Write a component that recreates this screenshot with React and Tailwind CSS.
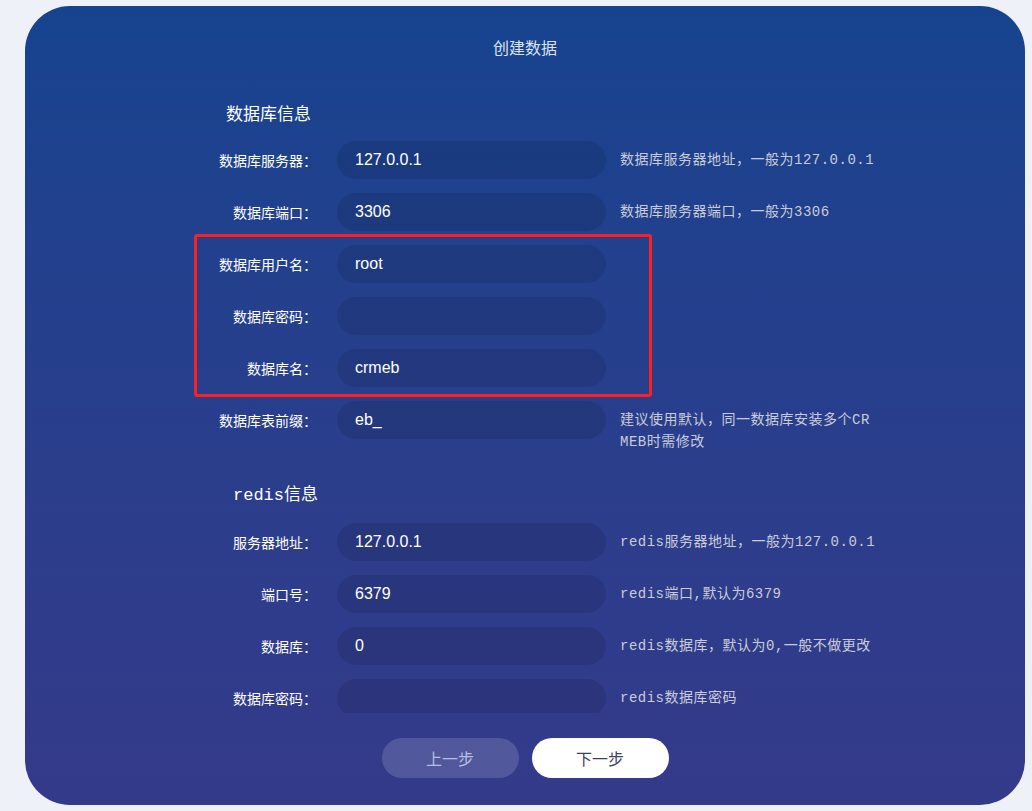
import React from 'react';

const cjk = "font-['Noto_Sans_CJK_SC',sans-serif]";
const mono = "font-['Liberation_Mono','Noto_Sans_CJK_SC',monospace]";

const dbFields = [
  { label: '数据库服务器：', value: '127.0.0.1', help: '数据库服务器地址，一般为127.0.0.1' },
  { label: '数据库端口：', value: '3306', help: '数据库服务器端口，一般为3306' },
  { label: '数据库用户名：', value: 'root' },
  { label: '数据库密码：', value: '' },
  { label: '数据库名：', value: 'crmeb' },
  { label: '数据库表前缀：', value: 'eb_', help: '建议使用默认，同一数据库安装多个CRMEB时需修改' },
];

const redisFields = [
  { label: '服务器地址：', value: '127.0.0.1', help: 'redis服务器地址，一般为127.0.0.1' },
  { label: '端口号：', value: '6379', help: 'redis端口,默认为6379' },
  { label: '数据库：', value: '0', help: 'redis数据库，默认为0,一般不做更改' },
  { label: '数据库密码：', value: '', help: 'redis数据库密码' },
];

function Row({ label, value, help }) {
  return (
    <div className="flex h-[38px] items-start">
      <div className={`${cjk} flex h-[38px] w-[127px] shrink-0 items-center justify-end text-[14px] text-white`}>
        {label}
      </div>
      <div className="ml-[20px] flex h-[38px] w-[269px] shrink-0 items-center rounded-full bg-black/10 pl-[18px] font-['Liberation_Sans',sans-serif] text-[16px] text-white">
        {value}
      </div>
      {help && (
        <div className={`${mono} ml-[14px] w-[257px] break-all pt-[8px] text-[14px] leading-[22px] tracking-[0.5px] text-[#c9ccd8]`}>
          {help}
        </div>
      )}
    </div>
  );
}

export default function App() {
  return (
    <div className="min-h-screen w-full bg-[#eef1f8] pl-[25px] pt-[6px]">
      <div className="relative flex h-[799px] w-[1000px] flex-col overflow-hidden rounded-[45px] bg-gradient-to-b from-[#16438f] to-[#343a8a]">
        <div className={`${cjk} pt-[28px] text-center text-[16px] leading-[26px] text-[#dce3f2]`}>创建数据</div>

        {/* scrolling form area */}
        <div className="mt-[20px] h-[633px] overflow-hidden pl-[165px]">
          <div className={`${cjk} ml-[36px] pt-[21px] text-[17px] leading-[24px] text-white`}>数据库信息</div>
          <div className="mt-[16px] flex flex-col gap-[14px]">
            {dbFields.map((f) => (
              <Row key={f.label} {...f} />
            ))}
          </div>

          <div className={`${mono} ml-[43px] mt-[45px] text-[17px] leading-[24px] text-white`}>redis信息</div>
          <div className="mt-[15px] flex flex-col gap-[14px]">
            {redisFields.map((f) => (
              <Row key={f.label} {...f} />
            ))}
          </div>
        </div>

        <div className={`${cjk} mt-[25px] flex justify-center gap-[13px] text-[16px]`}>
          <button className="h-[40px] w-[137px] rounded-full bg-white/15 text-[#b9bde2]">上一步</button>
          <button className="h-[40px] w-[137px] rounded-full bg-white text-[#3d3f66]">下一步</button>
        </div>

        {/* annotation box */}
        <div className="absolute left-[169px] top-[228px] h-[163px] w-[458px] rounded-[3px] border-[3px] border-[#ff1f1f]" />
      </div>
    </div>
  );
}
